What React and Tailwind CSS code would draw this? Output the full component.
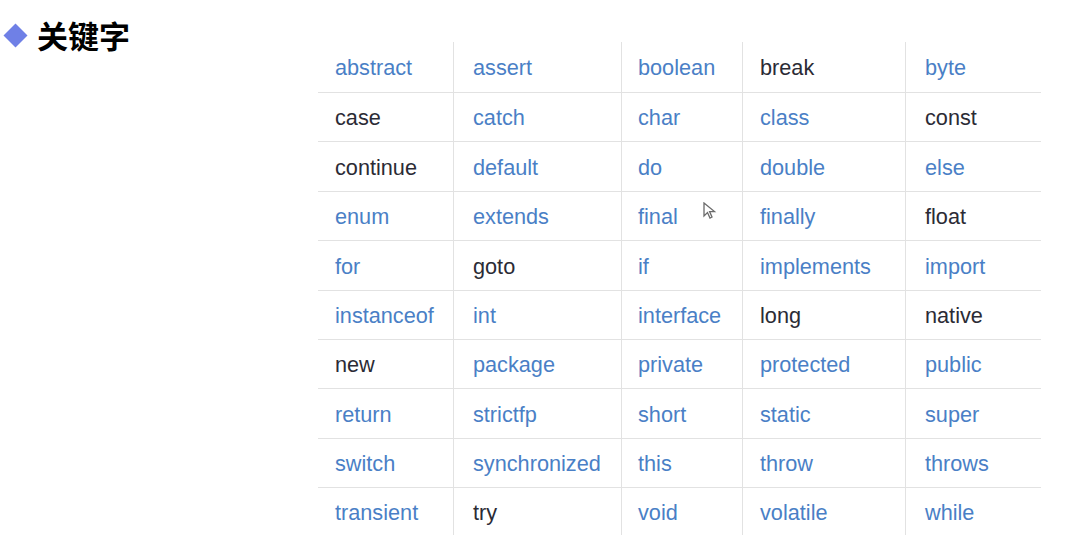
import React from 'react';

const B = 'b';
const D = 'd';

const rows = [
  [['abstract', B], ['assert', B], ['boolean', B], ['break', D], ['byte', B]],
  [['case', D], ['catch', B], ['char', B], ['class', B], ['const', D]],
  [['continue', D], ['default', B], ['do', B], ['double', B], ['else', B]],
  [['enum', B], ['extends', B], ['final', B], ['finally', B], ['float', D]],
  [['for', B], ['goto', D], ['if', B], ['implements', B], ['import', B]],
  [['instanceof', B], ['int', B], ['interface', B], ['long', D], ['native', D]],
  [['new', D], ['package', B], ['private', B], ['protected', B], ['public', B]],
  [['return', B], ['strictfp', B], ['short', B], ['static', B], ['super', B]],
  [['switch', B], ['synchronized', B], ['this', B], ['throw', B], ['throws', B]],
  [['transient', B], ['try', D], ['void', B], ['volatile', B], ['while', B]],
];

// width + left padding per column
const cols = [
  'w-[136px] pl-[17px]',
  'w-[168px] pl-[19px]',
  'w-[121px] pl-[16px]',
  'w-[163px] pl-[17px]',
  'w-[135px] pl-[19px]',
];

export default function App() {
  return (
    <div className="relative w-[1089px] h-[554px] bg-white overflow-hidden font-['Liberation_Sans',Arial,sans-serif]">
      <div className="flex">
        {/* Title */}
        <div className="w-[318px] shrink-0 pt-[19px] pl-[5px]">
          <div className="flex items-center gap-[13px]">
            <span className="ml-[2px] block w-[17px] h-[17px] rotate-45 bg-[#6f80e6]" />
            <span className="text-[31px] font-bold text-black leading-[32px] font-['Noto_Sans_CJK_SC',sans-serif]">
              关键字
            </span>
          </div>
        </div>

        {/* Keyword table */}
        <div className="pt-[42px]">
          {rows.map((row, ri) => (
            <div
              key={ri}
              className={`flex ${ri === 0 ? 'h-[51px]' : ri === rows.length - 1 ? 'h-[47px]' : 'h-[49.4px]'} ${
                ri < rows.length - 1 ? 'border-b border-[#e2e2e2]' : ''
              }`}
            >
              {row.map(([word, tone], ci) => (
                <div
                  key={ci}
                  className={`${cols[ci]} flex items-center pt-[2px] ${
                    ci < row.length - 1 ? 'border-r border-[#e2e2e2]' : ''
                  }`}
                >
                  <span
                    className={`text-[21.7px] leading-none ${
                      tone === B ? 'text-[#4a7fc6]' : 'text-[#2b2b35]'
                    }`}
                  >
                    {word}
                  </span>
                </div>
              ))}
            </div>
          ))}
        </div>
      </div>

      {/* mouse pointer */}
      <svg
        className="absolute left-[703px] top-[202px]"
        width="14"
        height="18"
        viewBox="0 0 14 18"
        fill="white"
        stroke="#6b6b6b"
        strokeWidth="1.3"
      >
        <path d="M1 1 L1 14 L4.5 10.5 L7 16 L9 15 L6.6 9.6 L11.5 9.6 Z" />
      </svg>
    </div>
  );
}
